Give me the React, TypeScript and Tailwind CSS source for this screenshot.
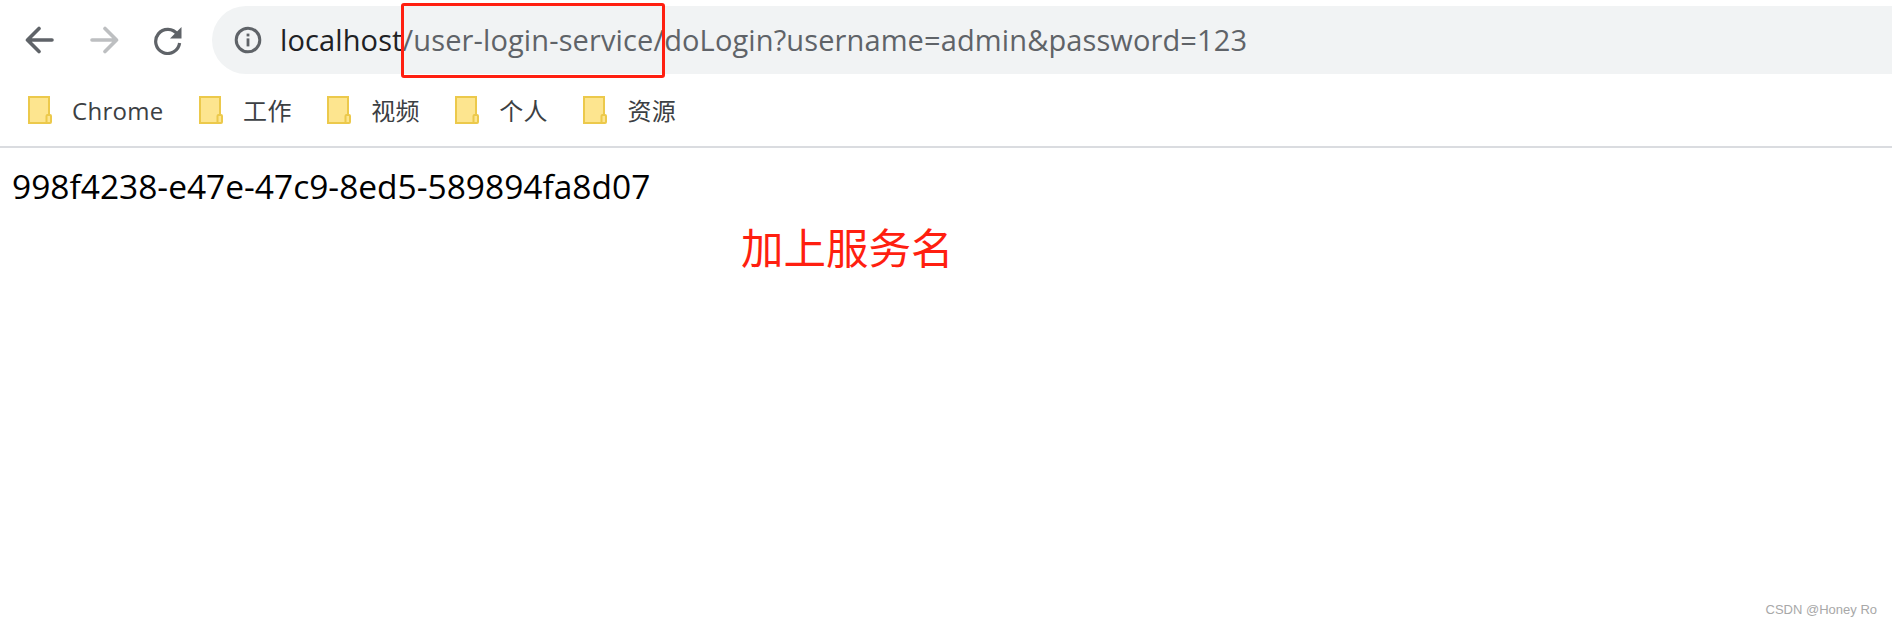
const uiFont = "font-['Open_Sans','Noto_Sans_CJK_SC',sans-serif]"

const BOOKMARKS = ['Chrome', '工作', '视频', '个人', '资源']

function BackIcon() {
  return (
    <svg width="30" height="30" viewBox="0 0 30 30" fill="none" stroke="#5f6368" strokeWidth="3.6" strokeLinecap="round" strokeLinejoin="round" aria-hidden="true">
      <path d="M27 15H3M14 3.5 2.5 15 14 26.5" />
    </svg>
  )
}

function ForwardIcon() {
  return (
    <svg width="30" height="30" viewBox="0 0 30 30" fill="none" stroke="#bdbfc1" strokeWidth="3.6" strokeLinecap="round" strokeLinejoin="round" aria-hidden="true">
      <path d="M3 15h24M16 3.5 27.5 15 16 26.5" />
    </svg>
  )
}

function ReloadIcon() {
  return (
    <svg width="30" height="30" viewBox="0 0 30 30" fill="none" aria-hidden="true">
      <path d="M24.5 9.5A12 12 0 1 0 26.6 18" stroke="#5f6368" strokeWidth="3.2" />
      <path d="M28.5 2v11.5H17z" fill="#5f6368" />
    </svg>
  )
}

function InfoIcon() {
  return (
    <svg width="28" height="28" viewBox="0 0 28 28" fill="none" aria-hidden="true">
      <circle cx="14" cy="14" r="11.8" stroke="#5f6368" strokeWidth="3" />
      <rect x="12.6" y="12.4" width="2.8" height="8" fill="#5f6368" />
      <rect x="12.6" y="7.6" width="2.8" height="2.8" fill="#5f6368" />
    </svg>
  )
}

function FolderIcon() {
  return (
    <svg width="24" height="28" viewBox="0 0 24 28" className="shrink-0" aria-hidden="true">
      <rect x="1" y="1" width="20" height="26" fill="#fde58f" stroke="#ecc94b" strokeWidth="2" />
      <rect x="18.5" y="19" width="4.5" height="8" rx="1" fill="#fde58f" stroke="#ecc94b" strokeWidth="2" />
    </svg>
  )
}

export default function App() {
  return (
    <div className={`relative h-[626px] w-[1892px] overflow-hidden bg-white ${uiFont}`}>
      <header className="h-[148px] border-b-2 border-[#dadce0]">
        <div className="flex h-[74px] items-start pt-[6px]">
          <div className="flex h-[68px] w-[212px] shrink-0 items-center gap-[34px] pl-[25px]">
            <BackIcon />
            <ForwardIcon />
            <ReloadIcon />
          </div>
          <div className="flex h-[68px] flex-1 items-center rounded-l-[34px] bg-[#f1f3f4] pl-[22px]">
            <InfoIcon />
            <div className="mb-[2px] ml-[18px] text-[29px] leading-none tracking-[0.12px] whitespace-nowrap text-[#5f6368]">
              <span className="text-[#202124]">localhost</span>/user-login-service/doLogin?username=admin&amp;password=123
            </div>
          </div>
        </div>
        <nav className="flex h-[72px] items-center gap-[35.5px] pl-[28px]">
          {BOOKMARKS.map((name) => (
            <div key={name} className="flex items-center gap-[20px]">
              <FolderIcon />
              <span className="mt-[2px] text-[24px] leading-none tracking-[0.3px] text-[#3c4043]">{name}</span>
            </div>
          ))}
        </nav>
      </header>

      <main className="pt-[18px] pl-[12px] font-['Open_Sans',sans-serif] text-[33.5px] leading-[40px] text-black">
        998f4238-e47e-47c9-8ed5-589894fa8d07
      </main>

      {/* annotations drawn over the browser shot */}
      <div className="absolute top-[3px] left-[401px] h-[75px] w-[264px] rounded-[3px] border-[3px] border-[#ff1f10]" />
      <div className="absolute top-[220px] left-[741px] font-['Noto_Sans_CJK_SC',sans-serif] text-[42.5px] leading-[52px] text-[#ff1f10]">
        加上服务名
      </div>
      <div className="absolute top-[600px] right-[15px] font-['Liberation_Sans',sans-serif] text-[13px] leading-[20px] text-[#a8a8a8]">
        CSDN @Honey Ro
      </div>
    </div>
  )
}
